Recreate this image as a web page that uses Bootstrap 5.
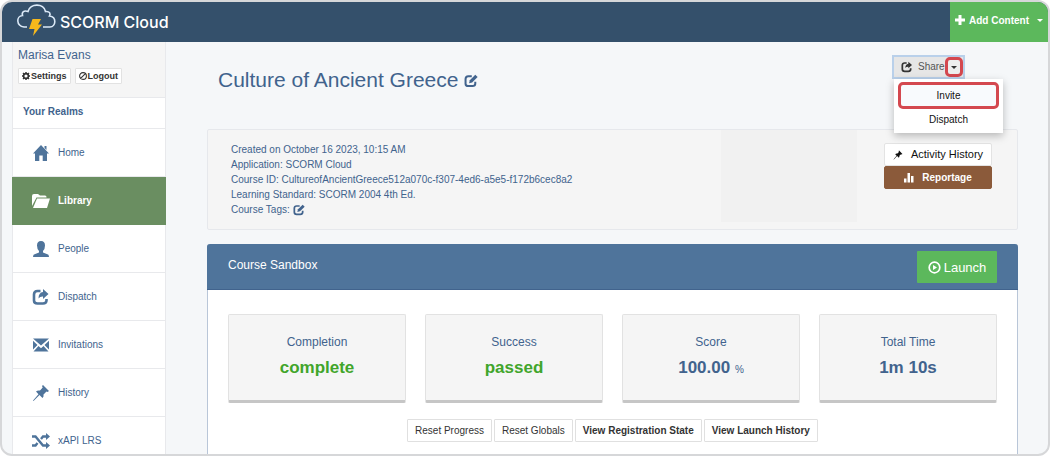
<!DOCTYPE html>
<html lang="en">
<head>
<meta charset="utf-8">
<meta name="viewport" content="width=device-width, initial-scale=1">
<title>SCORM Cloud - Culture of Ancient Greece</title>
<link href="https://cdn.jsdelivr.net/npm/bootstrap@5.3.0/dist/css/bootstrap.min.css" rel="stylesheet">
<style>
  :root { --ink: #41638d; --navy: #34506b; --steel: #4f749b; --go: #5cb85c; }
  body { font-family: "Liberation Sans", Arial, sans-serif; font-size: 10px; line-height: 15px; color: var(--ink); background: #fff; }
  a { text-decoration: none; color: inherit; }
  svg { fill: currentColor; flex: none; }
  .frame { height: 100vh; border: 2px solid #d6d7d9; border-radius: 12px; background: #f5f7f9; }
  .topbar { background: var(--navy); color: #fff; height: 40px; }
  .brand { font: 500 16px/24px Inter, sans-serif; color: #fff; padding-left: 14px; }
  .add-btn { background: var(--go); color: #fff; width: 98px; font-size: 10px; font-weight: 700; border: 0; border-radius: 0; padding: 0 0 4px; }
  .caret { width: 0; height: 0; border: 3px solid transparent; border-top-color: currentColor; border-bottom: 0; }
  .side { width: 154px; margin-left: 10px; }
  .user-box { height: 56px; background: #f5f5f5; border: 1px solid #e8e9ec; border-top: 0; padding: 4px 5px; }
  .user-name { font-size: 12px; line-height: 18px; }
  .mini { font-size: 9px; line-height: 14px; font-weight: 700; color: #333; background: #fff; border: 1px solid #e2e2e2; border-radius: 1px; padding: 0 3px; gap: 1px; }
  .realms { height: 31px; background: #fff; border: 1px solid #e8e9ec; border-top: 0; font-weight: 700; padding: 6px 10px; margin: 0; font-size: 10px; line-height: 16px; }
  .side-link { height: 48px; background: #fff; border: 1px solid #e8e9ec; border-top: 0; font-size: 10px; padding-left: 19px; gap: 8px; }
  .side-link svg { color: var(--steel); width: 18px; height: 18px; }
  .side-link.active { background: #6a8e61; color: #fff; border-color: #6a8e61; font-weight: 700; }
  .side-link.active svg { color: #fff; }
  .main-col { padding: 0 30px 0 41px; min-width: 0; }
  .title-row { height: 87px; padding: 13px 53px 0 11px; }
  .title-row h1 { font-size: 21px; line-height: 28px; margin: 11px 0 0; }
  .share-btn { width: 73px; height: 24px; background: #e6e6e6; border: 2px solid #b9d0ea; border-radius: 0; color: #555; font-size: 10px; line-height: 18px; padding: 0 0 0 7px; }
  .share-icon { margin-right: 5px; color: #333; }
  .share-menu { display: block; left: 2px; top: 24px; width: 109px; min-width: 0; padding: 3px 4px; border: 0; border-radius: 0; background: #fff; box-shadow: 0 3px 8px rgba(0,0,0,.25); z-index: 5; font-size: 10px; font-weight: 400; }
  .ring { border: 3px solid #d4484f; border-radius: 5px; background: #fff; }
  .share-caret { width: 18px; height: 20px; color: #333; flex: none; background: #eee; }
  .share-menu a { color: #111; line-height: 21px; display: block; text-align: center; }
  .share-menu a:first-child { background: #f8fafd; }
  .info-box { background: #f5f5f5; border: 1px solid #e6e8ec; height: 101px; padding: 0 25px 0 23px; border-radius: 2px; }
  .info-text { padding-top: 12px; }
  .shade { width: 136px; height: 92px; background: #f1f1f1; margin-right: 27px; }
  .side-actions { width: 108px; padding-top: 13px; }
  .action { height: 23px; font-size: 11px; border: 1px solid #e3e3e3; border-radius: 2px; background: #fff; color: #111; white-space: nowrap; padding: 0; }
  .action.brown { background: #8b5a3a; border-color: #8b5a3a; color: #fff; font-size: 10px; font-weight: 700; }
  .sandbox { margin-top: 14px; height: 240px; background: #fff; border: 1px solid #b9c6d8; border-top: 0; border-radius: 3px 3px 0 0; }
  .sandbox-head { background: var(--steel); height: 46px; color: #fff; padding: 0 21px; margin: 0 -1px; border-radius: 3px 3px 0 0; border-bottom: 1px solid #41638d; }
  .sandbox-head h2 { font-size: 12px; line-height: 18px; margin: 12px 0 0; }
  .launch { background: var(--go); color: #fff; width: 80px; height: 32px; border: 0; border-radius: 1px; font-size: 13px; margin-top: 7px; gap: 3px; }
  .stats { display: grid; grid-template-columns: repeat(4, 1fr); gap: 19px; padding: 24px 20px 16px; }
  .stat { background: #f5f5f5; border: 1px solid #e2e2e2; border-bottom: 3px solid #c6c6c6; border-radius: 2px; height: 89px; text-align: center; padding-top: 18px; }
  .stat dt { font-weight: 400; font-size: 12px; line-height: 18px; }
  .stat dd { font-weight: 700; font-size: 17px; line-height: 24px; margin: 5px 0 0; }
  .good { color: #41a52b; }
  .pct { font-size: 10px; font-weight: 400; }
  .tools { gap: 2px; }
  .tool { height: 23px; font-size: 10px; color: #333; background: #fff; border: 1px solid #e0e0e0; border-radius: 1px; padding: 0 7px; }
</style>
</head>
<body>
<svg class="d-none" aria-hidden="true">
  <symbol id="share" viewBox="0 0 18 18"><path d="M8.500 3H5.500Q2 3 2 6.500V12.500Q2 15.500 5.500 15.500H11Q14.500 15.500 14.500 12.500V11" fill="none" stroke="currentColor" stroke-width="2.600"/><path d="M11 1L16.500 6L11 11V8.500Q8 8.300 6.500 10.500Q6.500 4.500 11 4Z"/></symbol>
  <symbol id="edit" viewBox="0 0 18 18"><path d="M10 3H5.500Q2 3 2 6.500V12.500Q2 15.500 5.500 15.500H11Q14.500 15.500 14.500 12.500V10" fill="none" stroke="currentColor" stroke-width="2.600"/><path d="M14.500 1L17.500 4L10.500 11L6.500 12L7.500 8Z"/></symbol>
  <symbol id="pin" viewBox="0 0 18 18"><path d="M11 1L17 7L15.500 8L14.500 7.500L11.500 10.500Q12 12.500 10.500 14L7.500 11L1.500 17L1 16.500L6.500 10.300L4 7.500Q5.500 6 8 6.500L10.700 3.500L10 2Z"/></symbol>
</svg>
<div class="frame overflow-hidden d-flex flex-column">
  <header class="topbar d-flex justify-content-between flex-shrink-0">
    <a class="brand d-flex align-items-center" href="#">
      <svg width="44" height="36" viewBox="0 0 44 36" aria-hidden="true"><path d="M11 23H8C0 22 0 12 6.500 11.500C5.500 8 8 6 12 7.500C14 -1 28 -1 29.500 7.500C33.500 7 35 9.500 33.500 12C41 13 40 22.500 34 23H27" fill="none" stroke="#dbe9f7" stroke-width="1.600"/><path d="M16.500 15H25L22 20.500H26L17 32L18.500 25H13Z" fill="#f5b81c"/></svg>
      <span>SCORM Cloud</span>
    </a>
    <button class="add-btn d-flex align-items-center justify-content-center gap-1" type="button">
      <svg width="10" height="10" viewBox="0 0 10 10" aria-hidden="true"><path d="M3.500 0H6.500V3.500H10V6.500H6.500V10H3.500V6.500H0V3.500H3.500Z"/></svg>
      Add Content <span class="caret ms-1"></span>
    </button>
  </header>
  <div class="d-flex flex-grow-1">
    <nav class="side flex-shrink-0">
      <div class="user-box">
        <div class="user-name">Marisa Evans</div>
        <div class="d-flex gap-1 mt-1">
          <button class="mini d-flex align-items-center" type="button"><svg width="8" height="8" viewBox="0 0 8 8" aria-hidden="true"><circle cx="4" cy="4" r="2.400" fill="none" stroke="currentColor" stroke-width="1.600"/><path d="M4 0V1.500M4 6.500V8M0 4H1.500M6.500 4H8M1 1L2 2M6 6L7 7M7 1L6 2M1 7L2 6" stroke="currentColor" stroke-width="1.400"/></svg>Settings</button>
          <button class="mini d-flex align-items-center" type="button"><svg width="8" height="8" viewBox="0 0 8 8" aria-hidden="true"><path d="M7.400 4A3.400 3.400 0 1 1 .6 4A3.400 3.400 0 1 1 7.400 4M1.600 6.400L6.400 1.600" fill="none" stroke="currentColor" stroke-width="1.100"/></svg>Logout</button>
        </div>
      </div>
      <h2 class="realms">Your Realms</h2>
      <a class="side-link d-flex align-items-center" href="#"><svg viewBox="0 0 18 18" aria-hidden="true"><path d="M9 1L17 9.500H15V17H10.700V11.500H7.300V17H3V9.500H1L9 1ZM12.500 2H14.500V6L12.500 4Z"/></svg>Home</a>
      <a class="side-link active d-flex align-items-center" href="#" aria-current="page"><svg viewBox="0 0 18 18" aria-hidden="true"><path d="M0 14V4Q0 2 2 2H6L8 3.500H13Q14.500 3.500 14.500 5V5.500H4.500L0 14Z"/><path d="M5 6.500H18L15 16H1Z"/></svg>Library</a>
      <a class="side-link d-flex align-items-center" href="#"><svg viewBox="0 0 18 18" aria-hidden="true"><path d="M9 1Q13 1 13 5.500Q13 9 11 11V12.500L16 14.500Q17 15 17 17H1Q1 15 2 14.500L7 12.500V11Q5 9 5 5.500Q5 1 9 1Z"/></svg>People</a>
      <a class="side-link d-flex align-items-center" href="#"><svg><use href="#share"/></svg>Dispatch</a>
      <a class="side-link d-flex align-items-center" href="#"><svg viewBox="0 0 18 18" aria-hidden="true"><path d="M1 2.500H17L9 9.500ZM1 4.800L5.500 9L1 13.500ZM17 4.800L12.500 9L17 13.500ZM6.500 10L9 12.300L11.500 10L16.500 15.500H1.500Z"/></svg>Invitations</a>
      <a class="side-link d-flex align-items-center" href="#"><svg><use href="#pin"/></svg>History</a>
      <a class="side-link d-flex align-items-center" href="#"><svg viewBox="0 0 18 18" aria-hidden="true"><path d="M0 4.500H3.500L11 13.500H15M0 13.500H3.500L5.500 11M9 7L11 4.500H15" fill="none" stroke="currentColor" stroke-width="2.400"/><path d="M14 1L18 4.500L14 8ZM14 10L18 13.500L14 17Z"/></svg>xAPI LRS</a>
    </nav>
    <main class="main-col flex-grow-1">
      <div class="title-row d-flex justify-content-between align-items-start">
        <h1>Culture of Ancient Greece <svg width="14" height="14"><use href="#edit"/></svg></h1>
        <div class="position-relative">
          <button class="share-btn d-flex align-items-center" type="button" aria-expanded="true">
            <svg class="share-icon" width="12" height="12"><use href="#share"/></svg>Share
            <span class="ring share-caret d-flex align-items-center justify-content-center"><span class="caret"></span></span>
          </button>
          <div class="dropdown-menu share-menu">
            <a class="ring" href="#">Invite</a>
            <a href="#">Dispatch</a>
          </div>
        </div>
      </div>
      <section class="info-box d-flex align-items-start">
        <div class="info-text me-auto">
          <div>Created on October 16 2023, 10:15 AM</div>
          <div>Application: SCORM Cloud</div>
          <div>Course ID: CultureofAncientGreece512a070c-f307-4ed6-a5e5-f172b6cec8a2</div>
          <div>Learning Standard: SCORM 2004 4th Ed.</div>
          <div>Course Tags: <svg width="12" height="12"><use href="#edit"/></svg></div>
        </div>
        <div class="shade"></div>
        <div class="side-actions d-flex flex-column">
          <button class="action d-flex align-items-center justify-content-center gap-2" type="button"><svg width="10" height="10"><use href="#pin"/></svg>Activity History</button>
          <button class="action brown d-flex align-items-center justify-content-center gap-2" type="button"><svg width="10" height="10" viewBox="0 0 10 10" aria-hidden="true"><path d="M0 5.500H2.500V9.500H0ZM3.500 0H6V9.500H3.500ZM7 3H9.500V9.500H7Z"/></svg>Reportage</button>
        </div>
      </section>
      <section class="sandbox">
        <div class="sandbox-head d-flex justify-content-between align-items-start">
          <h2>Course Sandbox</h2>
          <button class="launch d-flex align-items-center justify-content-center" type="button"><svg width="13" height="13" viewBox="0 0 13 13" aria-hidden="true"><circle cx="6.500" cy="6.500" r="5.300" fill="none" stroke="currentColor" stroke-width="1.700"/><path d="M5 4L9 6.500L5 9Z"/></svg>Launch</button>
        </div>
        <dl class="stats m-0">
          <div class="stat"><dt>Completion</dt><dd class="good">complete</dd></div>
          <div class="stat"><dt>Success</dt><dd class="good">passed</dd></div>
          <div class="stat"><dt>Score</dt><dd>100.00 <span class="pct">%</span></dd></div>
          <div class="stat"><dt>Total Time</dt><dd>1m 10s</dd></div>
        </dl>
        <div class="d-flex justify-content-center tools">
          <button class="tool" type="button">Reset Progress</button>
          <button class="tool" type="button">Reset Globals</button>
          <button class="tool fw-bold" type="button">View Registration State</button>
          <button class="tool fw-bold" type="button">View Launch History</button>
        </div>
      </section>
    </main>
  </div>
</div>
<script src="https://cdn.jsdelivr.net/npm/bootstrap@5.3.0/dist/js/bootstrap.bundle.min.js"></script>
</body>
</html>
